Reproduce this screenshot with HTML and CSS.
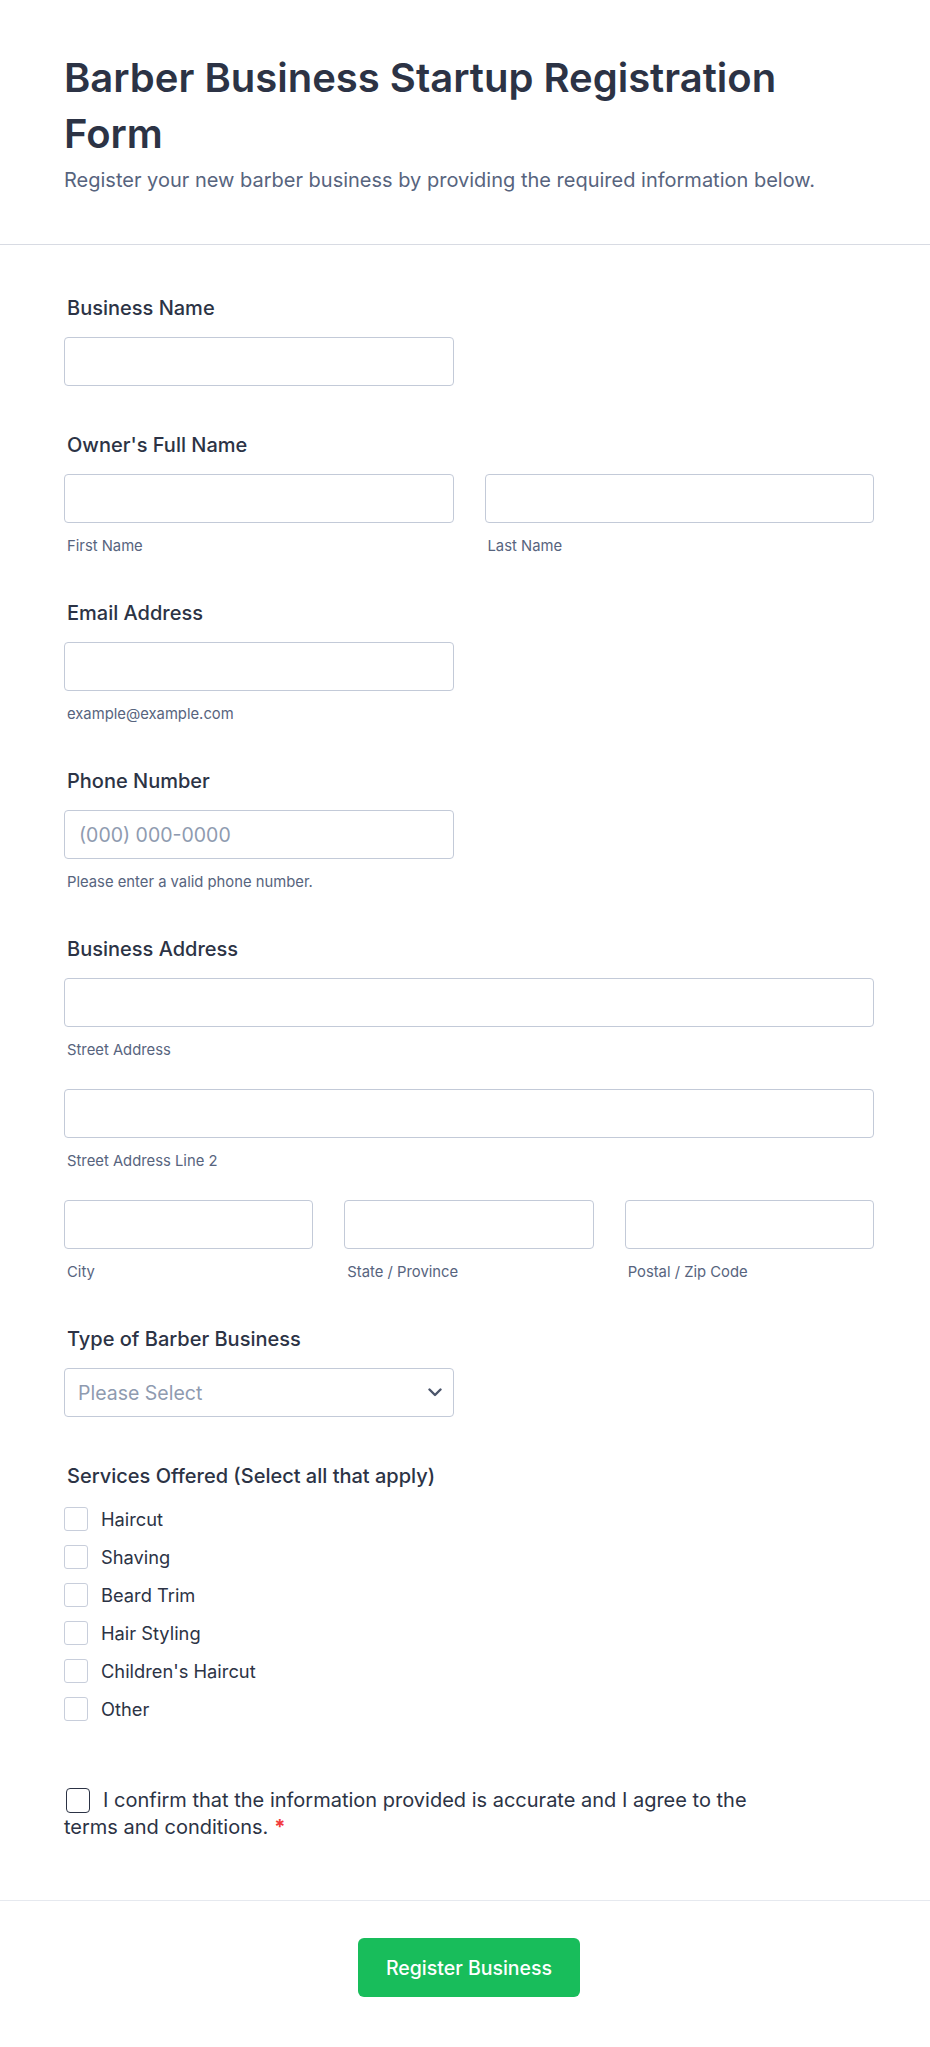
FILE: index.html
```html
<!DOCTYPE html>
<html lang="en">
<head>
<meta charset="utf-8">
<title>Barber Business Startup Registration Form</title>
<link rel="stylesheet" href="styles.css">
</head>
<body>
<div class="page">
  <header class="form-header">
    <h1 class="form-title">Barber Business Startup Registration Form</h1>
    <p class="form-subtitle">Register your new barber business by providing the required information below.</p>
  </header>

  <main class="form-body">
    <div class="field">
      <label class="field-label">Business Name</label>
      <input class="input input-half" type="text">
    </div>

    <div class="field">
      <label class="field-label">Owner's Full Name</label>
      <div class="grid-2">
        <div>
          <input class="input" type="text">
          <div class="sublabel">First Name</div>
        </div>
        <div>
          <input class="input" type="text">
          <div class="sublabel">Last Name</div>
        </div>
      </div>
    </div>

    <div class="field">
      <label class="field-label">Email Address</label>
      <input class="input input-half" type="email">
      <div class="sublabel">example@example.com</div>
    </div>

    <div class="field">
      <label class="field-label">Phone Number</label>
      <input class="input input-half" type="tel" placeholder="(000) 000-0000">
      <div class="sublabel">Please enter a valid phone number.</div>
    </div>

    <div class="field">
      <label class="field-label">Business Address</label>
      <div class="addr-line">
        <input class="input" type="text">
        <div class="sublabel">Street Address</div>
      </div>
      <div class="addr-line">
        <input class="input" type="text">
        <div class="sublabel">Street Address Line 2</div>
      </div>
      <div class="grid-3">
        <div>
          <input class="input" type="text">
          <div class="sublabel">City</div>
        </div>
        <div>
          <input class="input" type="text">
          <div class="sublabel">State / Province</div>
        </div>
        <div>
          <input class="input" type="text">
          <div class="sublabel">Postal / Zip Code</div>
        </div>
      </div>
    </div>

    <div class="field">
      <label class="field-label">Type of Barber Business</label>
      <div class="select-wrap">
        <div class="input select"><span class="select-placeholder">Please Select</span></div>
        <svg class="select-arrow" width="14" height="9" viewBox="0 0 14 9" aria-hidden="true">
          <path d="M1.5 1.5 L7 7 L12.5 1.5" fill="none" stroke="#4b556b" stroke-width="2.4" stroke-linecap="round" stroke-linejoin="round"/>
        </svg>
      </div>
    </div>

    <div class="field field-services">
      <label class="field-label">Services Offered (Select all that apply)</label>
      <ul class="check-list">
        <li class="check-item"><span class="check-box"></span><span>Haircut</span></li>
        <li class="check-item"><span class="check-box"></span><span>Shaving</span></li>
        <li class="check-item"><span class="check-box"></span><span>Beard Trim</span></li>
        <li class="check-item"><span class="check-box"></span><span>Hair Styling</span></li>
        <li class="check-item"><span class="check-box"></span><span>Children's Haircut</span></li>
        <li class="check-item"><span class="check-box"></span><span>Other</span></li>
      </ul>
    </div>

    <p class="confirm"><span class="confirm-box"></span>I confirm that the information provided is accurate and I agree to the terms and conditions.<span class="required">*</span></p>
  </main>

  <footer class="form-footer">
    <button class="submit-btn" type="button">Register Business</button>
  </footer>
</div>
</body>
</html>
```

FILE: styles.css
```css
* {
  box-sizing: border-box;
}

body {
  margin: 0;
  background: #ffffff;
  font-family: "Inter", "Noto Sans", "Liberation Sans", sans-serif;
  color: #2c3345;
}

.page {
  width: 930px;
  min-height: 2047px;
}

.form-header {
  padding: 50px 56px 50px 64px;
  border-bottom: 1px solid #d8dbe3;
}

.form-title {
  margin: 0;
  max-width: 760px;
  font-size: 40px;
  line-height: 56px;
  font-weight: 600;
  color: #2c3345;
}

.form-subtitle {
  margin: 5px 0 0;
  font-size: 20px;
  line-height: 27px;
  color: #57647e;
}

.form-body {
  padding: 50px 56px 59px 64px;
}

.field {
  margin-bottom: 46px;
}

.field-label {
  display: block;
  padding-left: 3px;
  font-size: 20px;
  line-height: 27px;
  font-weight: 500;
  color: #2c3345;
  margin-bottom: 15px;
}

.input {
  display: block;
  width: 100%;
  height: 49px;
  border: 1px solid #c3cad8;
  border-radius: 4px;
  background: #fff;
  padding: 0 14px;
  font-family: "Inter", "Noto Sans", sans-serif;
  font-size: 19.5px;
  color: #2c3345;
  outline: none;
}

.input::placeholder {
  color: #8f9bb0;
}

.input-half {
  width: calc((100% - 31px) / 2);
}

.grid-2 {
  display: grid;
  grid-template-columns: 1fr 1fr;
  column-gap: 31px;
}

.grid-3 {
  display: grid;
  grid-template-columns: 1fr 1fr 1fr;
  column-gap: 31px;
}

.sublabel {
  margin-top: 15px;
  padding-left: 3px;
  font-size: 14.8px;
  line-height: 16px;
  color: #57647e;
}

.addr-line {
  margin-bottom: 31px;
}

.select-wrap {
  position: relative;
  width: calc((100% - 31px) / 2);
}

.select {
  display: flex;
  align-items: center;
  padding-left: 13px;
}

.select-placeholder {
  color: #8f9bb0;
}

.select-arrow {
  position: absolute;
  right: 12px;
  top: 20px;
  pointer-events: none;
}

.field-services {
  margin-bottom: 66px;
}

.check-list {
  list-style: none;
  margin: 17px 0 0;
  padding: 0;
  display: flex;
  flex-direction: column;
  gap: 14px;
}

.check-item {
  display: flex;
  align-items: center;
  gap: 13px;
  height: 24px;
  font-size: 18.3px;
  line-height: 24px;
  color: #2c3345;
}

.check-box {
  flex: none;
  width: 24px;
  height: 24px;
  border: 1px solid #c8cedb;
  border-radius: 3px;
  background: #fff;
}

.confirm {
  margin: 0;
  max-width: 720px;
  font-size: 20px;
  line-height: 27px;
  color: #2c3345;
}

.confirm-box {
  display: inline-block;
  width: 24px;
  height: 25px;
  border: 1.5px solid #2c3345;
  border-radius: 4px;
  vertical-align: -6px;
  margin: 0 13px 0 2px;
}

.required {
  display: inline-block;
  color: #f23a3c;
  font-weight: 700;
  margin-left: 6px;
}

.form-footer {
  border-top: 1px solid #e6e9ef;
  padding: 37px 56px 50px 64px;
  text-align: center;
}

.submit-btn {
  display: inline-block;
  height: 59px;
  padding: 0 28px;
  border: none;
  border-radius: 6px;
  background: #18bd5b;
  color: #ffffff;
  font-family: "Inter", "Noto Sans", sans-serif;
  font-size: 19.5px;
  font-weight: 500;
  cursor: pointer;
}
```
